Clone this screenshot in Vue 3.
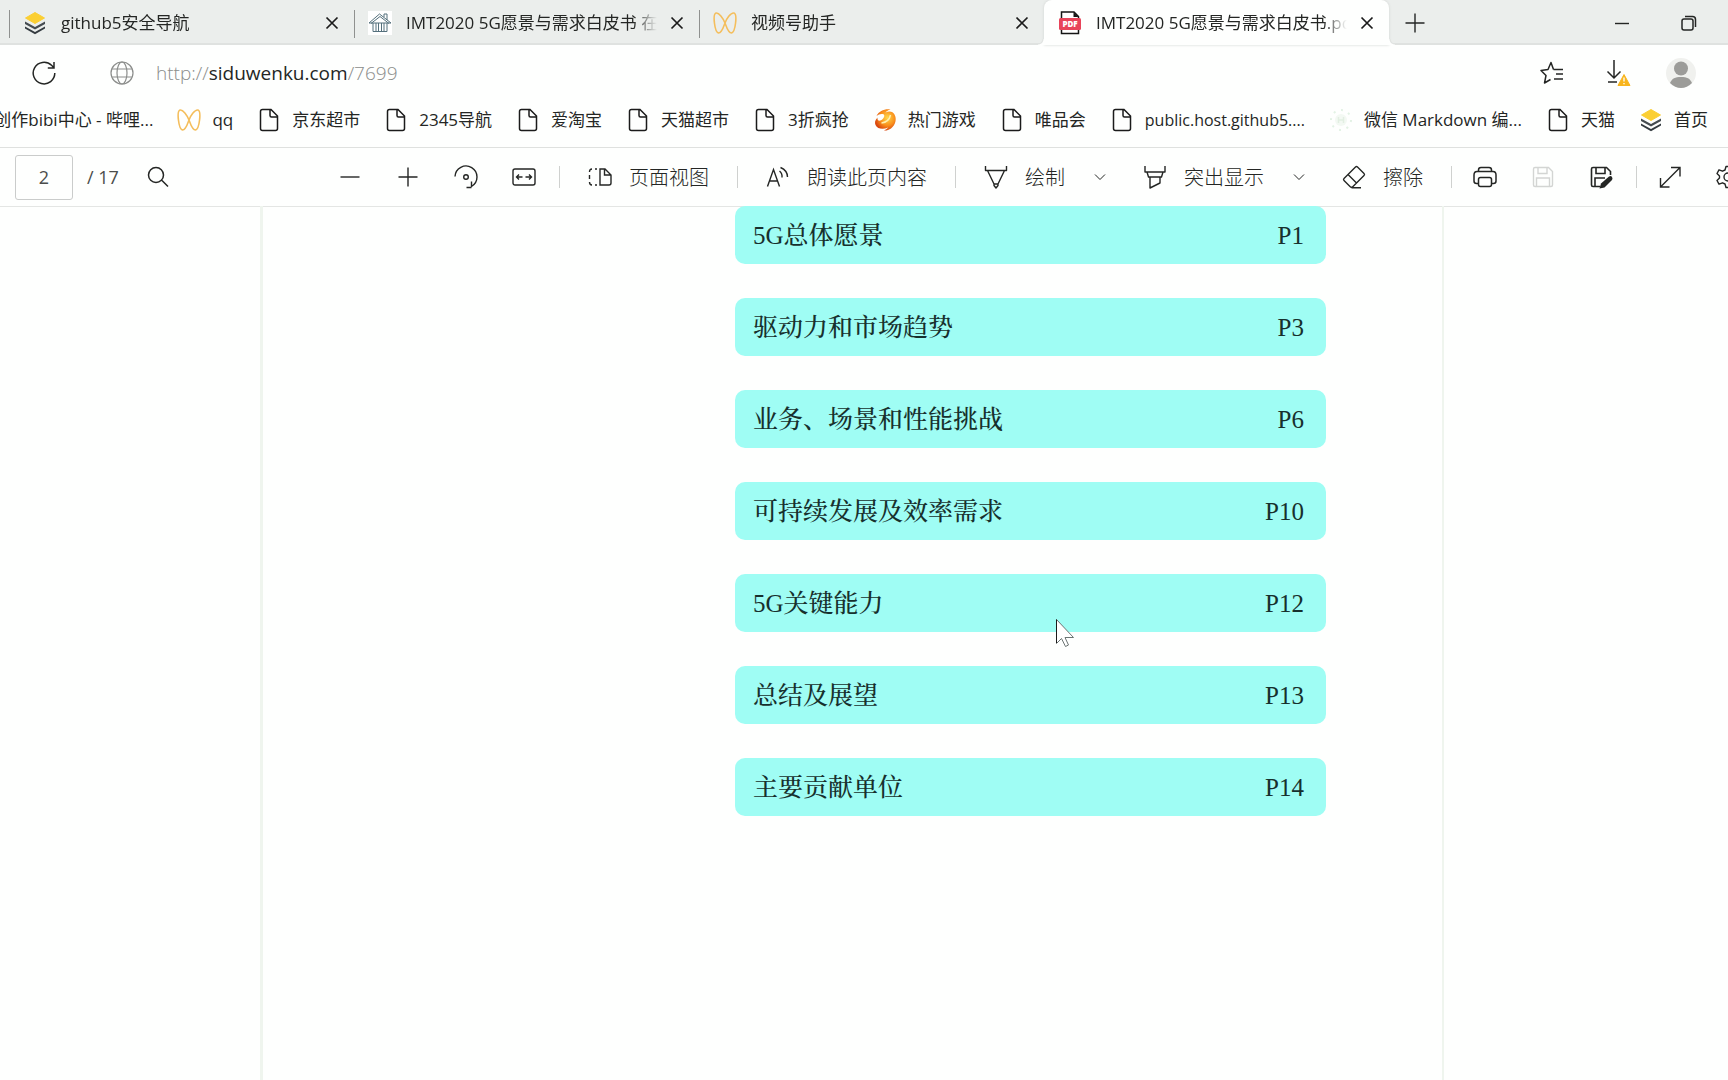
<script setup>
import { ref } from 'vue'

const tabs = [
  { icon: 'layers', title: 'github5安全导航' },
  { icon: 'house', title: 'IMT2020 5G愿景与需求白皮书 在线' },
  { icon: 'butterfly', title: '视频号助手' },
  { icon: 'pdf', title: 'IMT2020 5G愿景与需求白皮书.pdf', active: true },
]

const bookmarks = [
  { icon: 'doc', title: '创作bibi中心 - 哔哩...' },
  { icon: 'butterfly', title: 'qq' },
  { icon: 'doc', title: '京东超市' },
  { icon: 'doc', title: '2345导航' },
  { icon: 'doc', title: '爱淘宝' },
  { icon: 'doc', title: '天猫超市' },
  { icon: 'doc', title: '3折疯抢' },
  { icon: 'fire', title: '热门游戏' },
  { icon: 'doc', title: '唯品会' },
  { icon: 'doc', title: 'public.host.github5....', latin: true },
  { icon: 'spark', title: '微信 Markdown 编...' },
  { icon: 'doc', title: '天猫' },
  { icon: 'layers', title: '首页' },
]

const contents = [
  { title: '5G总体愿景', page: 'P1' },
  { title: '驱动力和市场趋势', page: 'P3' },
  { title: '业务、场景和性能挑战', page: 'P6' },
  { title: '可持续发展及效率需求', page: 'P10' },
  { title: '5G关键能力', page: 'P12' },
  { title: '总结及展望', page: 'P13' },
  { title: '主要贡献单位', page: 'P14' },
]

const pageNumber = ref('2')
</script>

<template>
  <svg class="sprite" aria-hidden="true">
    <defs>
      <radialGradient id="flame" cx="0.6" cy="0.4" r="0.6">
        <stop offset="0" stop-color="#ffd94a" />
        <stop offset="0.6" stop-color="#f98f1c" />
        <stop offset="1" stop-color="#d9480f" />
      </radialGradient>
    </defs>
    <symbol id="layers" viewBox="0 0 24 24">
      <path d="M12 1.500 21.500 7 12 12.500 2.500 7Z" fill="#fbcf33" stroke="#fbcf33" stroke-linejoin="round" />
      <path d="M2 10.500 12 16 22 10.500V13L12 18.600 2 13Z" fill="#454c50" />
      <path d="M2 15.500 12 21 22 15.500V17.500L12 23.200 2 17.500Z" fill="#343b40" />
    </symbol>
    <symbol id="house" viewBox="0 0 24 24">
      <path d="M0 0H24V24H0Z" fill="#fff" />
      <path d="M1 12 11.500 3 23 12M3 12.500 12 5.500 21 12.500M1 12H23M16 6V3H19V9M5 12V20.500H19V12M8 12V20M10.500 12V20M13.500 12V20M16 12V20" fill="none" stroke="#54707c" />
    </symbol>
    <symbol id="butterfly" viewBox="0 0 24 24">
      <path d="M12 12C10 7 6 1.500 3 2C-.5 3 1.500 21 5.500 22C9 22 10.500 16 12 12C13.500 8 17.500 1.500 21 2C24.500 3 22.500 21 18.500 22C15 22 13.500 16 12 12Z" fill="none" stroke="#f4be5c" stroke-width="1.600" />
    </symbol>
    <symbol id="pdf" viewBox="0 0 24 24">
      <path d="M3.500 1H16L20.500 5.500V22.500H3.500Z" fill="#fff" stroke="#151515" stroke-width="1.500" />
      <path d="M15.500 1V6H20.500Z" fill="#151515" />
      <rect x="1" y="7" width="22" height="12" rx="1.500" fill="#e8445a" />
      <text x="12" y="16" text-anchor="middle" font-size="8" font-weight="900" font-family="Open Sans, sans-serif" fill="#fff">PDF</text>
    </symbol>
    <symbol id="doc" viewBox="0 0 24 24">
      <path d="M5.500 1.500H14L20.500 8V20.500Q20.500 22.500 18.500 22.500H5.500Q3.500 22.500 3.500 20.500V3.500Q3.500 1.500 5.500 1.500ZM13 1.500V7.500Q13 9 14.500 9H20.500" fill="none" stroke="#1b1b1b" stroke-width="1.500" />
    </symbol>
    <symbol id="fire" viewBox="0 0 24 24">
      <path d="M3.500 8C6 3 12 .5 17.500 1.500C15 2.200 13 3.500 12.500 4.500C17 2.500 20 4 21.500 6.500C24 11 22.500 17 18 20.500C16 22 13 22.800 11 22.500C13 21.500 14.500 20.500 15 19.500C10 22 4.500 21 2.500 17C1.500 14.500 2 12 4.500 9.500C4 12.500 6 13.500 8.500 12C11.500 10 12.500 6.500 9.500 6C7.500 5.800 5 6.500 3.500 8Z" fill="url(#flame)" />
      <path d="M8.500 15Q16 14 17.500 7" fill="none" stroke="#fff0b0" stroke-width="1.500" />
    </symbol>
    <symbol id="spark" viewBox="0 0 24 24">
      <circle cx="12" cy="12" r="10" fill="none" stroke="#e3f2e5" stroke-width="2" stroke-dasharray="2 5.800" />
      <circle cx="12" cy="12" r="6" fill="#f3f9f3" />
      <path d="M9.500 9V15M14.500 9V15M9.500 12H14.500" stroke="#e2efe2" stroke-width="1.500" />
    </symbol>
    <symbol id="close" viewBox="0 0 24 24">
      <path d="M6.500 6.500 17.500 17.500M17.500 6.500 6.500 17.500" stroke="#1b1b1b" stroke-width="1.700" />
    </symbol>
    <symbol id="plus" viewBox="0 0 24 24">
      <path d="M2.500 12H21.500M12 2.500V21.500" stroke="currentColor" stroke-width="1.400" />
    </symbol>
    <symbol id="minus" viewBox="0 0 24 24">
      <path d="M2.500 12H21.500" stroke="currentColor" stroke-width="1.400" />
    </symbol>
    <symbol id="minimize" viewBox="0 0 24 24">
      <path d="M5 12.500H19" stroke="currentColor" stroke-width="1.400" />
    </symbol>
    <symbol id="restore" viewBox="0 0 24 24">
      <g fill="none" stroke="currentColor" stroke-width="1.500">
        <rect x="5" y="8" width="11" height="11" rx="2" />
        <path d="M8 5.500H15.500Q18.500 5.500 18.500 8.500V16" />
      </g>
    </symbol>
    <symbol id="refresh" viewBox="0 0 24 24">
      <path d="M22.800 12A10.800 10.800 0 1 1 19.500 4.300L22 6.800M22 1V7H15.800" fill="none" stroke="currentColor" stroke-width="1.500" />
    </symbol>
    <symbol id="globe" viewBox="0 0 24 24">
      <g fill="none" stroke="currentColor" stroke-width="1.200">
        <circle cx="12" cy="12" r="11" />
        <ellipse cx="12" cy="12" rx="5" ry="11" />
        <path d="M2 8H22M2 16H22" />
      </g>
    </symbol>
    <symbol id="favorites" viewBox="0 0 24 24">
      <path d="M13.500 8.500 11 1.500 8 8.500 1 9.500 6 14.500 4.500 22 10.500 18.500M13.500 8.500H23M16 13H23M14 18H23" fill="none" stroke="currentColor" stroke-width="1.500" stroke-linejoin="round" />
    </symbol>
    <symbol id="download" viewBox="-4 -1 32 30">
      <path d="M11 1V18.500M4.500 12.500 11 19 17.500 12.500M5 23H14" fill="none" stroke="currentColor" stroke-width="1.500" />
      <path d="M21 15.500 27 26.500H15Z" fill="#f8b51d" stroke="#f8b51d" stroke-linejoin="round" />
      <path d="M21 18.500V22.500M21 24V25.300" stroke="#fff" stroke-width="1.300" />
    </symbol>
    <symbol id="avatar" viewBox="0 0 30 30">
      <circle cx="15" cy="15" r="15" fill="#f0f1ee" />
      <circle cx="15" cy="10.500" r="7" fill="#9c9c99" />
      <path d="M4 25C6 20.500 9 19 15 19S24 20.500 26 25Q21 30 15 30T4 25Z" fill="#9c9c99" />
    </symbol>
    <symbol id="search" viewBox="0 0 24 24">
      <path d="M16 15.500 22 21.500M17.500 10A7.500 7.500 0 1 1 2.500 10A7.500 7.500 0 1 1 17.500 10Z" fill="none" stroke="currentColor" stroke-width="1.500" />
    </symbol>
    <symbol id="rotate" viewBox="0 0 24 24">
      <path d="M1 11.500A11 11 0 1 1 17.500 21.500V16.500M17.500 22.500H12.500" fill="none" stroke="currentColor" stroke-width="1.400" />
      <circle cx="12" cy="12" r="2.300" fill="none" stroke="currentColor" stroke-width="1.400" />
    </symbol>
    <symbol id="fit" viewBox="0 0 24 24">
      <g fill="none" stroke="currentColor" stroke-width="1.400">
        <rect x="1" y="4" width="22" height="16" rx="2" />
        <path d="M4.500 12H10.500M7 9.500 4.500 12 7 14.500M13.500 12H19.500M17 9.500 19.500 12 17 14.500" />
      </g>
    </symbol>
    <symbol id="pageview" viewBox="0 0 24 24">
      <path d="M9 4H7M4 4Q1.500 4 1.500 7M1.500 10V14M1.500 17Q1.500 20 4 20M7 20H9M12 4H17L23 10V18Q23 20 21 20H12ZM16.500 4V10H23" fill="none" stroke="currentColor" stroke-width="1.400" />
    </symbol>
    <symbol id="read" viewBox="0 0 24 24">
      <path d="M1.500 21.500 7.500 4.500 13.500 21.500M3.500 16H11.500M13.500 6Q16.500 8.500 16 12.500M14.500 2.500Q21.500 5.500 21.500 12" fill="none" stroke="currentColor" stroke-width="1.400" />
    </symbol>
    <symbol id="pen" viewBox="0 0 24 24">
      <path d="M1.500 1V5.500H22.500V1M3.500 5.500 10 19H14L20.500 5.500M10 19V20.500L12 23 14 20.500V19" fill="none" stroke="currentColor" stroke-width="1.400" stroke-linejoin="round" />
    </symbol>
    <symbol id="highlighter" viewBox="0 0 24 24">
      <path d="M2 1V7H22V1M4 7 5.500 12H18.500L20 7M7 12V23L17 18V12" fill="none" stroke="currentColor" stroke-width="1.400" stroke-linejoin="round" />
    </symbol>
    <symbol id="chevron" viewBox="0 0 12 12">
      <path d="M1 3.500 6 8.500 11 3.500" fill="none" stroke="currentColor" />
    </symbol>
    <symbol id="eraser" viewBox="0 0 24 24">
      <path d="M15.500 2 22 8.500Q23 9.500 22 10.500L11 21.500Q9.500 23 8 21.500L2 15.500Q1 14.500 2 13.500L13.500 2Q14.500 1 15.500 2ZM6 9.500 14.500 18M9.500 22.700H19" fill="none" stroke="currentColor" stroke-width="1.400" />
    </symbol>
    <symbol id="print" viewBox="0 0 24 24">
      <g fill="none" stroke="currentColor" stroke-width="1.500">
        <path d="M5.500 6.500V5Q5.500 2.500 8 2.500H16Q18.500 2.500 18.500 5V6.500M5.500 18.500H3.500Q1 18.500 1 16V10Q1 6.500 4 6.500H20Q23 6.500 23 10V16Q23 18.500 20.500 18.500H18.500" />
        <rect x="5.500" y="12.500" width="13" height="9" rx="2" />
      </g>
    </symbol>
    <symbol id="save" viewBox="0 0 24 24">
      <path d="M4 2.500H17.500L21.500 6.500V20Q21.500 21.500 20 21.500H4Q2.500 21.500 2.500 20V4Q2.500 2.500 4 2.500ZM7 2.500V8.500H16V2.500M5.500 21.500V13H18.500V21.500" fill="none" stroke="currentColor" stroke-width="1.400" />
    </symbol>
    <symbol id="saveas" viewBox="0 0 24 24">
      <path d="M11 21.500H4Q2.500 21.500 2.500 20V4Q2.500 2.500 4 2.500H17.500L21.500 6.500V10M7 2.500V8.500H16V2.500M6 21.500V13H16" fill="none" stroke="currentColor" stroke-width="1.600" />
      <path d="M10.500 23.500 12 18.500 20 11.500Q22 10.500 23 12T23 15L15.500 22.500Z" fill="currentColor" />
    </symbol>
    <symbol id="expand" viewBox="0 0 24 24">
      <path d="M2.500 22 22 2.500M13 2.500H22V11.500M2.500 13V22H11.500" fill="none" stroke="currentColor" stroke-width="1.400" />
    </symbol>
    <symbol id="gear" viewBox="0 0 24 24">
      <path d="M10 1.500H14L15 5 17.500 6.200 21 4.800 23 8.500 20.500 11V13L23 15.500 21 19.200 17.500 17.800 15 19 14 22.500H10L9 19 6.500 17.800 3 19.200 1 15.500 3.500 13V11L1 8.500 3 4.800 6.500 6.200 9 5Z" fill="none" stroke="currentColor" stroke-width="1.400" stroke-linejoin="round" />
      <circle cx="12" cy="12" r="4" fill="none" stroke="currentColor" stroke-width="1.400" />
    </symbol>
  </svg>

  <div class="browser">
    <header class="tabstrip">
      <div v-for="tab in tabs" :key="tab.title" class="tab" :class="{ active: tab.active }">
        <svg class="icon"><use :href="'#' + tab.icon" /></svg>
        <span class="tab-title">{{ tab.title }}</span>
        <button class="tab-close" aria-label="关闭标签页"><svg class="icon"><use href="#close" /></svg></button>
      </div>
      <button class="new-tab" aria-label="新建标签页"><svg class="icon"><use href="#plus" /></svg></button>
      <div class="window-controls">
        <button aria-label="最小化"><svg class="icon"><use href="#minimize" /></svg></button>
        <button aria-label="还原"><svg class="icon"><use href="#restore" /></svg></button>
      </div>
    </header>

    <div class="addressbar">
      <button class="refresh" aria-label="刷新"><svg class="icon"><use href="#refresh" /></svg></button>
      <svg class="icon globe"><use href="#globe" /></svg>
      <a class="url" href="#">http://<b>siduwenku.com</b>/7699</a>
      <div class="actions">
        <button aria-label="收藏夹"><svg class="icon"><use href="#favorites" /></svg></button>
        <button aria-label="下载"><svg class="icon download"><use href="#download" /></svg></button>
        <button aria-label="个人资料"><svg class="icon avatar"><use href="#avatar" /></svg></button>
      </div>
    </div>

    <nav class="bookmarks">
      <a v-for="mark in bookmarks" :key="mark.title" class="bookmark" :class="{ latin: mark.latin }" href="#">
        <svg class="icon"><use :href="'#' + mark.icon" /></svg>
        <span>{{ mark.title }}</span>
      </a>
    </nav>

    <div class="toolbar">
      <div class="pager">
        <input v-model="pageNumber" class="page-input" type="text" aria-label="页码" />
        <span class="page-total">/ 17</span>
        <button aria-label="查找"><svg class="icon"><use href="#search" /></svg></button>
      </div>
      <div class="group zoom">
        <button class="tool" aria-label="缩小"><svg class="icon"><use href="#minus" /></svg></button>
        <button class="tool" aria-label="放大"><svg class="icon"><use href="#plus" /></svg></button>
        <button class="tool" aria-label="旋转"><svg class="icon"><use href="#rotate" /></svg></button>
        <button class="tool" aria-label="适合宽度"><svg class="icon"><use href="#fit" /></svg></button>
      </div>
      <div class="group divided">
        <button class="labelled"><svg class="icon"><use href="#pageview" /></svg><span>页面视图</span></button>
      </div>
      <div class="group divided">
        <button class="labelled"><svg class="icon"><use href="#read" /></svg><span>朗读此页内容</span></button>
      </div>
      <div class="group divided">
        <button class="labelled"><svg class="icon"><use href="#pen" /></svg><span>绘制</span></button>
        <button class="more" aria-label="绘制选项"><svg class="small"><use href="#chevron" /></svg></button>
        <button class="labelled"><svg class="icon"><use href="#highlighter" /></svg><span>突出显示</span></button>
        <button class="more" aria-label="突出显示选项"><svg class="small"><use href="#chevron" /></svg></button>
        <button class="labelled"><svg class="icon"><use href="#eraser" /></svg><span>擦除</span></button>
      </div>
      <div class="group divided compact">
        <button class="tool" aria-label="打印"><svg class="icon"><use href="#print" /></svg></button>
        <button class="tool" aria-label="保存" disabled><svg class="icon"><use href="#save" /></svg></button>
        <button class="tool" aria-label="另存为"><svg class="icon"><use href="#saveas" /></svg></button>
      </div>
      <div class="group divided compact">
        <button class="tool" aria-label="全屏"><svg class="icon"><use href="#expand" /></svg></button>
        <button class="tool" aria-label="设置"><svg class="icon"><use href="#gear" /></svg></button>
      </div>
    </div>

    <main class="viewer">
      <article class="sheet">
        <a v-for="entry in contents" :key="entry.page" class="entry" href="#">
          <span>{{ entry.title }}</span>
          <span>{{ entry.page }}</span>
        </a>
      </article>
      <svg class="cursor" viewBox="0 0 18 28">
        <path d="M.5 .5V24.500L5.500 19.500 9.500 27.500 12.500 26 9 18.500H17.500Z" fill="#fff" stroke="#6b7473" />
        <path d="M.5 .5V24" stroke="#1b1b1b" />
      </svg>
    </main>
  </div>
</template>

<style>
body {
  margin: 0;
  background: #fefffe;
}
</style>

<style scoped>
.sprite {
  position: absolute;
  width: 0;
  height: 0;
}

.browser {
  display: flex;
  flex-direction: column;
  min-height: 100vh;
  overflow: hidden;
  color: #242624;
  font: 17px/24px "Open Sans", "Noto Sans CJK SC", sans-serif;
}

button {
  display: flex;
  align-items: center;
  justify-content: center;
  padding: 0;
  border: 0;
  background: none;
  color: inherit;
  font: inherit;
  white-space: nowrap;
}

a {
  color: inherit;
  text-decoration: none;
}

.icon {
  flex: none;
  width: 24px;
  height: 24px;
}

.icon.download {
  width: 32px;
  height: 30px;
}

.icon.avatar {
  width: 30px;
  height: 30px;
}

.small {
  width: 12px;
  height: 12px;
}

.tabstrip {
  display: flex;
  height: 45px;
  box-sizing: border-box;
  padding-left: 9px;
  background: #ebeeec;
  box-shadow: inset 0 -2px #dfe2e0;
}

.tab {
  display: flex;
  flex: 0 1 345px;
  align-items: center;
  box-sizing: border-box;
  min-width: 0;
  padding: 0 10px 0 14px;
  background: linear-gradient(#8f918f, #8f918f) 0 10px / 1px 28px no-repeat;
}

.tab.active {
  position: relative;
  border-radius: 8px 8px 0 0;
  background: #fefffe;
  box-shadow: 0 0 3px #d0d3d1;
}

.tab.active::before,
.tab.active::after {
  content: "";
  position: absolute;
  bottom: 0;
  width: 6px;
  height: 6px;
}

.tab.active::before {
  right: 100%;
  background: radial-gradient(circle at 0 0, transparent 4px, #dfe2e0 5px, #fefffe 6px);
}

.tab.active::after {
  left: 100%;
  background: radial-gradient(circle at 100% 0, transparent 4px, #dfe2e0 5px, #fefffe 6px);
}

.tab-title {
  flex: 1;
  min-width: 0;
  margin-left: 14px;
  overflow: hidden;
  white-space: nowrap;
  mask-image: linear-gradient(to left, transparent, #000 24px);
}

.tab-close {
  margin-left: 8px;
}

.new-tab {
  width: 52px;
}

.window-controls {
  display: flex;
  margin-left: auto;
  padding-right: 6px;
}

.window-controls button {
  width: 67px;
}

.addressbar {
  display: flex;
  align-items: center;
  height: 56px;
  padding: 0 32px;
}

.globe {
  margin-left: 54px;
  color: #8b8d8b;
}

.url {
  margin-left: 22px;
  color: #8b8d8b;
  font-size: 19px;
  font-weight: 300;
}

.url b {
  color: #242624;
  font-weight: 400;
}

.actions {
  display: flex;
  align-items: center;
  gap: 35px;
  margin-left: auto;
}

.bookmarks {
  display: flex;
  align-items: center;
  justify-content: flex-end;
  gap: 24px;
  height: 38px;
  padding: 0 20px 8px 0;
  border-bottom: 1px solid #dfe1df;
}

.bookmark {
  display: flex;
  flex: none;
  align-items: center;
  gap: 11px;
  white-space: nowrap;
}

.bookmark.latin {
  font-size: 16px;
}

.toolbar {
  display: flex;
  align-items: center;
  height: 58px;
  padding-left: 15px;
  border-bottom: 1px solid #e4e6e4;
  font-size: 20px;
}

.pager {
  display: flex;
  flex: none;
  align-items: center;
  width: 306px;
  font-size: 18px;
}

.page-input {
  box-sizing: border-box;
  width: 58px;
  height: 45px;
  border: 1px solid #cacccb;
  border-radius: 3px;
  background: none;
  color: #4b4d4b;
  font: inherit;
  text-align: center;
}

.page-total {
  width: 59px;
  margin-left: 14px;
  color: #4b4d4b;
}

.group {
  display: flex;
  flex: none;
  align-items: center;
}

.group.zoom {
  padding-right: 6px;
}

.group.divided {
  padding: 0 27px 0 29px;
  background: linear-gradient(#cfd1cf, #cfd1cf) 0 50% / 1px 22px no-repeat;
}

.group.divided.compact {
  padding: 0 6px 0 5px;
}

.tool {
  width: 58px;
  height: 40px;
}

.tool:disabled {
  color: #d3d5d3;
}

.labelled {
  gap: 17px;
  font-weight: 300;
}

.labelled span {
  padding: 2px 1px 0 0;
}

.more {
  justify-content: flex-start;
  width: 77px;
  padding-left: 28px;
}

.viewer {
  position: relative;
  flex: 1;
  display: flex;
  padding: 0 284px 0 260px;
}

.sheet {
  display: flex;
  flex: 1;
  flex-direction: column;
  gap: 34px;
  margin-top: -1px;
  padding: 0 116px 0 472px;
  border: solid #eff5ee;
  border-width: 0 2px 0 3px;
}

.entry {
  display: flex;
  align-items: center;
  justify-content: space-between;
  box-sizing: border-box;
  height: 58px;
  padding: 2px 22px 0 18px;
  border-radius: 10px;
  background: #9ffdf4;
  color: #17302d;
  font: 500 25px/30px "Liberation Serif", "Noto Serif CJK SC", "Noto Sans CJK SC", serif;
}

.cursor {
  position: absolute;
  top: 412px;
  left: 1056px;
  width: 18px;
  height: 28px;
}
</style>
